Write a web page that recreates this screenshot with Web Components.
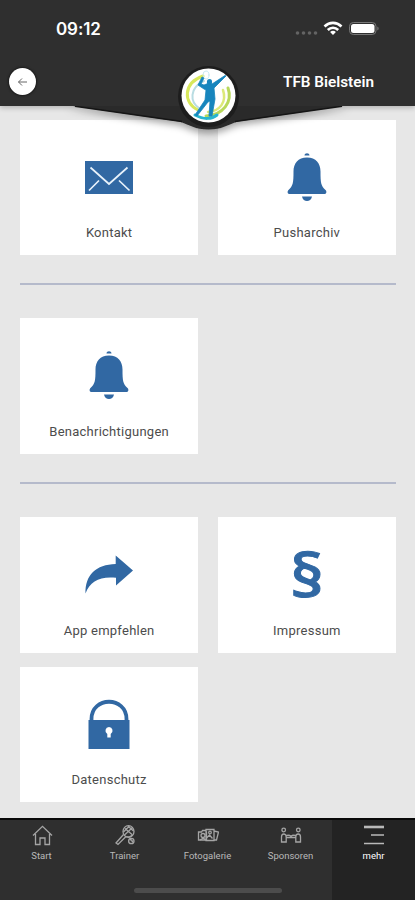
<!DOCTYPE html>
<html lang="de">
<head>
<meta charset="utf-8">
<meta name="viewport" content="width=device-width, initial-scale=1">
<title>TFB Bielstein</title>
<style>
* {
    box-sizing: border-box;
}

:root {
    --dark-color: #2f2f2f;
    --accent-color: #3168a3;
    --page-color: #e7e7e7;
}

body {
    margin: 0;
    font-family: Roboto, "Liberation Sans", sans-serif;
    background: var(--page-color);
    overflow: hidden;
}
</style>
</head>
<body>

<app-screen>
    <app-header slot="header" time="09:12">TFB Bielstein</app-header>

    <tile-group>
        <menu-tile icon="mail">Kontakt</menu-tile>
        <menu-tile icon="bell">Pusharchiv</menu-tile>
    </tile-group>
    <tile-group>
        <menu-tile icon="bell">Benachrichtigungen</menu-tile>
    </tile-group>
    <tile-group>
        <menu-tile icon="share">App empfehlen</menu-tile>
        <menu-tile icon="paragraph">Impressum</menu-tile>
        <menu-tile icon="lock">Datenschutz</menu-tile>
    </tile-group>

    <tab-bar slot="footer">
        <tab-item icon="home">Start</tab-item>
        <tab-item icon="racket">Trainer</tab-item>
        <tab-item icon="gallery">Fotogalerie</tab-item>
        <tab-item icon="people">Sponsoren</tab-item>
        <tab-item icon="more" active>mehr</tab-item>
    </tab-bar>
</app-screen>

<script>
const tileIcons = {
    mail: `<path d="M0 8h48v33H0z"/>
        <path d="M5.500 14.500 24 31 42.500 14.500M4 37.500 14 27.500M44.500 37.500 34 27.500" fill="none" stroke="#e8f2fb" stroke-width="1.700"/>`,
    bell: `<path d="M21.500 2.500c0-3 5-3 5 0zM19 43.500h10c-1 6-9 6-10 0z"/>
        <path d="M24 4.500c9 0 13.500 6 13.500 14 0 11 .5 14.500 5 18.500 1.500 1.500 1 4-1 4h-35c-2 0-2.500-2.500-1-4 4.500-4 5-7.500 5-18.500 0-8 4.500-14 13.500-14z"/>`,
    share: `<path d="M30.700 5.500 48 20.500 31 35.500V27.700C15 26 5 31 .5 43.500 0 25 11 14.500 30.700 14z"/>`,
    paragraph: `<text x="24" y="47" text-anchor="middle" textLength="34" lengthAdjust="spacingAndGlyphs" font-family="Open Sans, Noto Sans, sans-serif" font-weight="600" font-size="59" stroke="var(--accent-color)" stroke-width=".9">§</text>`,
    lock: `<path d="M6.500 23V19c0-23 35-23 35 0v4" fill="none" stroke="var(--accent-color)" stroke-width="3.800"/>
        <path d="M3.500 20h41v29h-41z"/>
        <path d="M24 27a3.700 3.700 0 0 1 1.700 6.900V37.500h-3.400V33.900A3.700 3.700 0 0 1 24 27z" fill="#fff"/>`
};

const tabIcons = {
    home: `<path d="M2 11.500 11.500 2.300 21 11.500M4.500 10V20.500H9V14h5v6.500h4.500V10"/>`,
    racket: `<ellipse cx="14.500" cy="7.500" rx="5.500" ry="5.800"/>
        <path d="M9.500 10.500 2 19l2 1.500 8-8M11 4.500l7 6M14 2l5.500 5M18.500 3.500 10.500 11M15.500 2l-6 6M12.500 12.500c2 1 5 0 6-2"/>
        <circle cx="17.300" cy="17" r="2.700"/><path d="M15.500 15.500c2 0 3 1 3 3"/>`,
    gallery: `<path d="M1.500 8h3l1-1.500h3L9.500 8v8h-8zM9 5.500h8v11H9zM17 7l4.500 1-2 8H17"/>
        <circle cx="6" cy="11.500" r="2"/><circle cx="13" cy="8.500" r="1.300"/><path d="m9.500 14 3-3 3 3.500M3 16l3.500-2 2 2"/>`,
    people: `<circle cx="3.700" cy="6" r="1.800"/><circle cx="18.300" cy="6" r="1.800"/>
        <path d="M1.500 18v-5c0-4 4.700-4 4.700 0v5zM15.800 18v-5c0-4 4.700-4 4.700 0v5zM6.200 11.500l2.800-.3 2 1 2-1 2.800.3M6.500 13.500h9"/>`,
    more: `<g stroke="#b9b9b9"><path d="M1 3h20" stroke-width="2.600"/><path d="M8 11h13M1 19.500h20" stroke-width="1.600"/></g>`
};

class AppScreen extends HTMLElement {
    constructor() {
        super();

        this.attachShadow({ mode: 'open' });
        this.shadowRoot.innerHTML = `
<style>
:host {
    display: flex;
    flex-direction: column;
    height: 900px;
    background: var(--page-color);
}

main {
    flex: 1;
    min-height: 0;
    padding: 13.500px 19px 0 20px;
}
</style>
<slot name="header"></slot>
<main><slot></slot></main>
<slot name="footer"></slot>`;
    }
}

class AppHeader extends HTMLElement {
    constructor() {
        super();

        this.attachShadow({ mode: 'open' });
        this.shadowRoot.innerHTML = `
<style>
:host {
    display: flex;
    flex-direction: column;
    height: 106px;
    position: relative;
    z-index: 1;
    background: var(--dark-color);
    box-shadow: 0 2px 5px rgba(0, 0, 0, .22);
    color: #fff;
}

.status {
    display: flex;
    justify-content: space-between;
    align-items: center;
    height: 58px;
    padding: 0 34px 0 56px;
}

.status__time {
    font: 600 17px/20px Inter, Roboto, sans-serif;
    letter-spacing: -.1px;
}

.status__icons {
    display: block;
}

.nav {
    display: flex;
    justify-content: space-between;
    align-items: center;
    height: 47px;
    padding: 0 41px 0 9px;
}

.nav__back {
    display: flex;
    justify-content: center;
    align-items: center;
    width: 27px;
    height: 27px;
    border-radius: 50%;
    background: #fff;
    box-shadow: 0 0 2px 1px #1b1b1b;
}

.nav__title {
    font-size: 15.300px;
    font-weight: 600;
    line-height: 20px;
}

/* the wedge and the club logo hang over the first row of tiles */
.badge {
    position: absolute;
    left: 0;
    top: 60px;
    z-index: -1;
}
</style>
<div class="status">
    <span class="status__time"></span>
    <svg class="status__icons" width="91" height="20" viewBox="0 0 91 20">
        <g fill="#646464"><circle cx="7.500" cy="14" r="1.800"/><circle cx="13.500" cy="14" r="1.800"/><circle cx="19.500" cy="14" r="1.800"/><circle cx="25.500" cy="14" r="1.800"/></g>
        <g fill="none" stroke="#fff" stroke-width="2.600"><path d="M34.500 7.500c5-4.800 12-4.800 17 0M37.800 11c3-3 7.400-3 10.400 0"/></g>
        <path d="m43 16-2.900-3c1.700-1.600 4.100-1.600 5.800 0z" fill="#fff"/>
        <rect x="59.500" y="3.500" width="26.500" height="12" rx="3.800" fill="none" stroke="#777"/>
        <rect x="61" y="5" width="23.500" height="9" rx="2.500" fill="#fff"/>
        <path d="M87.300 7.500v4c1.800-.6 1.800-3.400 0-4z" fill="#777"/>
    </svg>
</div>
<div class="nav">
    <span class="nav__back">
        <svg width="11" height="11" viewBox="0 0 11 11" fill="none" stroke="#666" stroke-width="1"><path d="M10 6H1.500M5 2.500 1.500 6 5 9.500"/></svg>
    </span>
    <span class="nav__title"><slot></slot></span>
</div>
<svg class="badge" width="415" height="80" viewBox="0 0 415 80">
    <defs><filter id="shade" x="-10%" y="-10%" width="120%" height="150%"><feDropShadow dx="0" dy="4" stdDeviation="3.500" flood-opacity=".35"/></filter></defs>
    <path d="M66 45H350L238 61.500C227 65 222 69.500 208.500 69.500S190 65 179 61.500z" fill="#2b2b2b" filter="url(#shade)"/>
    <path d="M75 46.300 182 61.500M342 46.300 235 61.500" stroke="#151515" stroke-width="1.600"/>
    <path d="M66 35H350V46H66z" fill="#2f2f2f"/>
    <circle cx="208.500" cy="36.500" r="30.500" fill="#1d1d1d"/>
    <circle cx="208.500" cy="35.500" r="27" fill="#fff"/>
    <g fill="none" stroke-linecap="round">
        <path d="M203 16c-20 7-20 27-5 34" stroke="#d8e85c" stroke-width="3"/>
        <path d="M204 21c-15 7-14 21-5 27" stroke="#b8dce2" stroke-width="2"/>
        <path d="M228 28c5 14-5 27-22 28" stroke="#b8d85b" stroke-width="3"/>
        <path d="M223 30c4 12-3 21-15 22" stroke="#dce979" stroke-width="2.500"/>
        <path d="M195 55c9 5 17 4 22 0" stroke="#27b6cf" stroke-width="3"/>
        <ellipse cx="206" cy="15" rx="3" ry="4" stroke="#c9e9f2" stroke-width="1"/>
    </g>
    <path d="M225 15.500 212 24l-3-1-5 2-3-1 3-6-2-1-4 8 6 4 2 1-1 10-10 15 2 1 11-14 2-1-1 15h3l3-17-1-11 12-12z" fill="#1785bd" stroke="#1785bd" stroke-width=".8"/>
    <ellipse cx="209.500" cy="22" rx="2.600" ry="3" fill="#1785bd"/>
</svg>`;
    }

    connectedCallback() {
        this.shadowRoot.querySelector('.status__time').textContent = this.getAttribute('time');
    }
}

class TileGroup extends HTMLElement {
    constructor() {
        super();

        this.attachShadow({ mode: 'open' });
        this.shadowRoot.innerHTML = `
<style>
:host {
    display: grid;
    grid-template-columns: 1fr 1fr;
    gap: 14px 19.500px;
}

:host(:not(:last-of-type)) {
    padding-bottom: 28px;
    margin-bottom: 33px;
    border-bottom: 2px solid #b5bacb;
}
</style>
<slot></slot>`;
    }
}

class MenuTile extends HTMLElement {
    constructor() {
        super();

        this.attachShadow({ mode: 'open' });
        this.shadowRoot.innerHTML = `
<style>
:host {
    display: flex;
    flex-direction: column;
    align-items: center;
    height: 135.700px;
    padding-top: 33px;
    background: #fff;
    color: #4c4c4c;
}

svg {
    fill: var(--accent-color);
    overflow: visible;
}

.label {
    margin-top: 23.800px;
    font-size: 13px;
    line-height: 18px;
    letter-spacing: .25px;
}
</style>
<svg width="48" height="48" viewBox="0 0 48 48"></svg>
<span class="label"><slot></slot></span>`;
    }

    connectedCallback() {
        this.shadowRoot.querySelector('svg').innerHTML = tileIcons[this.getAttribute('icon')];
    }
}

class TabBar extends HTMLElement {
    constructor() {
        super();

        this.attachShadow({ mode: 'open' });
        this.shadowRoot.innerHTML = `
<style>
:host {
    display: flex;
    height: 82px;
    position: relative;
    background: var(--dark-color);
    border-top: 2px solid #090909;
}

/* home indicator of the phone */
.indicator {
    position: absolute;
    left: 134px;
    bottom: 7px;
    width: 148px;
    height: 5px;
    border-radius: 3px;
    background: #4c4c4c;
}
</style>
<slot></slot>
<div class="indicator"></div>`;
    }
}

class TabItem extends HTMLElement {
    constructor() {
        super();

        this.attachShadow({ mode: 'open' });
        this.shadowRoot.innerHTML = `
<style>
:host {
    display: flex;
    flex: 1;
    flex-direction: column;
    align-items: center;
    padding-top: 4px;
    color: #b9b9b9;
}

:host([active]) {
    background: #232323;
    color: #fff;
}

svg {
    fill: none;
    stroke: #a5a5a5;
    stroke-width: 1.300;
}

.label {
    margin-top: 3px;
    font-size: 9.500px;
    line-height: 14px;
}
</style>
<svg width="22" height="22" viewBox="0 0 22 22"></svg>
<span class="label"><slot></slot></span>`;
    }

    connectedCallback() {
        this.shadowRoot.querySelector('svg').innerHTML = tabIcons[this.getAttribute('icon')];
    }
}

customElements.define('app-screen', AppScreen);
customElements.define('app-header', AppHeader);
customElements.define('tile-group', TileGroup);
customElements.define('menu-tile', MenuTile);
customElements.define('tab-bar', TabBar);
customElements.define('tab-item', TabItem);
</script>
</body>
</html>
